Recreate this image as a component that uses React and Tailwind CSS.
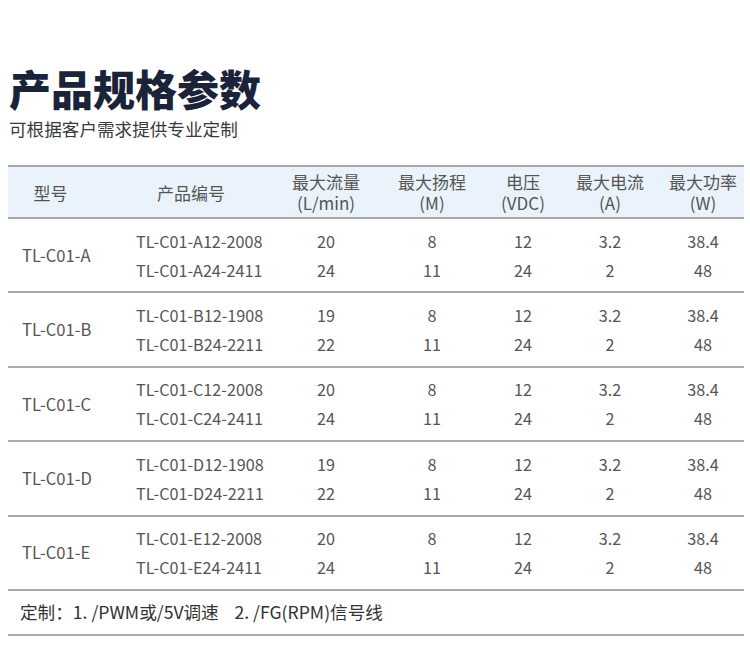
import React from "react";

const rows = [
  { model: "TL-C01-A", items: [["TL-C01-A12-2008", "20", "8", "12", "3.2", "38.4"], ["TL-C01-A24-2411", "24", "11", "24", "2", "48"]] },
  { model: "TL-C01-B", items: [["TL-C01-B12-1908", "19", "8", "12", "3.2", "38.4"], ["TL-C01-B24-2211", "22", "11", "24", "2", "48"]] },
  { model: "TL-C01-C", items: [["TL-C01-C12-2008", "20", "8", "12", "3.2", "38.4"], ["TL-C01-C24-2411", "24", "11", "24", "2", "48"]] },
  { model: "TL-C01-D", items: [["TL-C01-D12-1908", "19", "8", "12", "3.2", "38.4"], ["TL-C01-D24-2211", "22", "11", "24", "2", "48"]] },
  { model: "TL-C01-E", items: [["TL-C01-E12-2008", "20", "8", "12", "3.2", "38.4"], ["TL-C01-E24-2411", "24", "11", "24", "2", "48"]] },
];

const grid = "grid grid-cols-[84px_188px_92px_120px_62px_112px_74px]";

function Line() {
  return <div className="h-[2px] bg-[#a9a9a9]" />;
}

export default function App() {
  return (
    <div
      className="w-[750px] h-[666px] bg-white overflow-hidden"
      style={{ fontFamily: '"Noto Sans CJK SC", "Noto Sans", sans-serif' }}
    >
      {/* Title */}
      <div className="pl-[9px] pt-[67px]">
        <h1 className="text-[42px] leading-[42px] font-black text-[#1b2338]">产品规格参数</h1>
        <p className="mt-[8px] text-[17.6px] leading-[24px] text-[#3a3a3a]">可根据客户需求提供专业定制</p>
      </div>

      {/* Table */}
      <div className="ml-[8px] w-[736px] mt-[24px] text-[#555]">
        <Line />
        <div className={`${grid} h-[50px] items-center bg-[#eaf3fb] text-[17px] leading-[21px]`}>
          <div className="text-center pl-[1px]">型号</div>
          <div className="text-center pl-[10px]">产品编号</div>
          <div className="text-center">最大流量<br />(L/min)</div>
          <div className="text-center">最大扬程<br />(M)</div>
          <div className="text-center">电压<br />(VDC)</div>
          <div className="text-center">最大电流<br />(A)</div>
          <div className="text-center">最大功率<br />(W)</div>
        </div>
        <Line />
        {rows.map((r) => (
          <div key={r.model}>
            <div className={`${grid} h-[72.4px] items-center text-[16.2px]`}>
              <div className="pl-[14px] whitespace-nowrap text-[16.6px]">{r.model}</div>
              <div className="col-span-6 flex flex-col">
                {r.items.map((it) => (
                  <div key={it[0]} className="grid grid-cols-[188px_92px_120px_62px_112px_74px] h-[29px] items-center">
                    <div className="pl-[44px]">{it[0]}</div>
                    {it.slice(1).map((v, i) => (
                      <div key={i} className="text-center">{v}</div>
                    ))}
                  </div>
                ))}
              </div>
            </div>
            <Line />
          </div>
        ))}
        <div className="h-[43px] flex items-center pl-[12px] text-[17.6px] text-[#333] whitespace-pre">
          定制：1. /PWM或/5V调速    2. /FG(RPM)信号线
        </div>
        <Line />
      </div>
    </div>
  );
}
